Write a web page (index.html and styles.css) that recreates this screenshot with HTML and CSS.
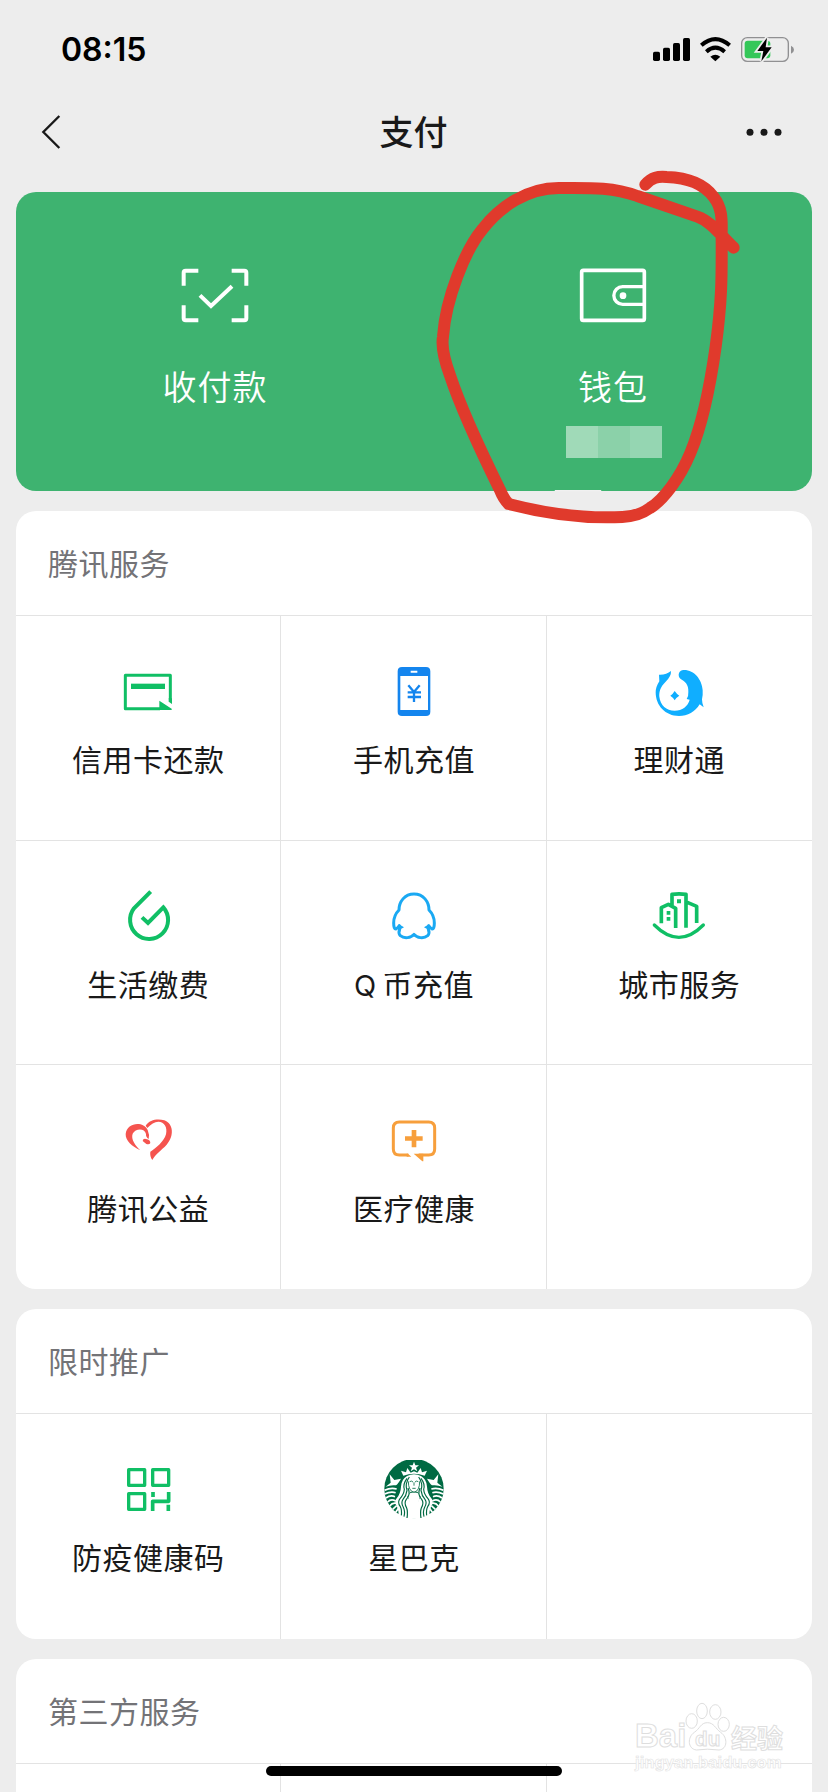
FILE: index.html
```html
<!DOCTYPE html>
<html lang="zh-CN">
<head>
<meta charset="utf-8">
<title>支付</title>
<link rel="stylesheet" href="styles.css">
</head>
<body>
<div class="screen">
  <header class="status">
    <span class="time">08:15</span>
    <svg class="status-icons" viewBox="708 105 450 90">
      <rect x="717" y="155" width="21" height="28" rx="5"/>
      <rect x="747" y="143" width="21" height="40" rx="5"/>
      <rect x="777" y="129" width="21" height="54" rx="5"/>
      <rect x="807" y="114" width="21" height="69" rx="5"/>
      <path d="M862 136Q904 99 947 136M877 155Q904 131 932 155" fill="none" stroke="#000" stroke-width="12"/>
      <path d="M889 170Q904 158 919 170L904 184Z"/>
      <rect x="983" y="113" width="140" height="71" rx="17" fill="none" stroke="#909092" stroke-width="4"/>
      <path d="M1131 137Q1140 141 1140 149Q1140 157 1131 161Z" fill="#909092"/>
      <rect x="992" y="122" width="77" height="53" rx="9" fill="#34c759"/>
      <path d="M1059 113L1030 153H1048L1042 184L1073 142H1055Z" fill="#000" stroke="#ededed" stroke-width="11" paint-order="stroke"/>
    </svg>
  </header>
  <nav class="nav">
    <svg class="back" viewBox="120 339 66 114"><path d="M178 348L130 396L178 444" fill="none" stroke="#191919" stroke-width="7"/></svg>
    <h1 class="title">支付</h1>
    <svg class="more" viewBox="990 380 120 33"><circle cx="1008" cy="396" r="10.5"/><circle cx="1050" cy="396" r="10.5"/><circle cx="1092" cy="396" r="10.5"/></svg>
  </nav>

  <main class="content">
    <section class="hero">
      <div class="hero-item">
        <svg class="hero-icon" viewBox="540 261 210 171"><path d="M551 317V278Q551 272 557 272H595M695 272H733Q739 272 739 278V317M739 376V415Q739 421 733 421H695M595 421H557Q551 421 551 415V376M600 346L633 378L696 319" fill="none" stroke="#fff" stroke-width="12"/></svg>
        <span class="hero-label">收付款</span>
      </div>
      <div class="hero-item">
        <svg class="hero-icon" viewBox="492 321 210 171"><rect x="503" y="331" width="188" height="150" rx="5" fill="none" stroke="#fff" stroke-width="11"/><path d="M691 380H626A26 26 0 0 0 626 433H691" fill="none" stroke="#fff" stroke-width="10"/><circle cx="627" cy="407" r="10" fill="#fff"/></svg>
        <span class="hero-label">钱包</span>
        <span class="mosaic"><i class="m1"></i><i class="m2"></i><i class="m3"></i></span>
      </div>
    </section>

    <section class="card">
      <h2 class="card-title">腾讯服务</h2>
      <div class="grid">
        <div class="cell">
          <svg class="icon" viewBox="354 486 180 180" fill="#10bf65"><path d="M511 598V526H376V626H480" fill="none" stroke="#10bf65" stroke-width="9" stroke-linejoin="round"/><rect x="393" y="551" width="102" height="16"/><path d="M478 602L516 627Q516 630 512 630H478ZM506 595H516V612L506 605Z"/></svg>
          <span class="label">信用卡还款</span>
        </div>
        <div class="cell">
          <svg class="icon" viewBox="72 126 180 180"><path fill="#1485ee" fill-rule="evenodd" d="M126 141H198Q211 141 211 154V275Q211 288 198 288H126Q113 288 113 275V154Q113 141 126 141ZM121 168V270H204V168ZM152 152V158H172V152Z"/><path d="M145 196L162 216L179 196M162 216V246M143 217H183M143 231H183" fill="none" stroke="#1485ee" stroke-width="7"/></svg>
          <span class="label">手机充值</span>
        </div>
        <div class="cell">
          <svg class="icon" viewBox="868 126 180 180" fill="#10aeff"><path d="M898 164Q920 165 934 153Q935 169 918 185C902 200 898 215 899 230C902 256 920 272 945 272C968 272 985 258 990 239L981 237Q987 228 986 216C987 193 976 185 963 177C952 168 957 150 972 150C1003 149 1027 178 1029 211Q1030 225 1027 238Q1027 250 1032 262L1020 253C1006 276 984 288 958 288C917 288 888 257 888 217Q888 201 899 184Z"/><path d="M945 213Q951 222 959 227Q950 232 945 241Q940 232 932 227Q940 222 945 213Z"/></svg>
          <span class="label">理财通</span>
        </div>
        <div class="cell">
          <svg class="icon" viewBox="174 80 180 180"><path d="M272 94L222 144A57 57 0 1 0 310 141L264 188L246 171" fill="none" stroke="#10bf65" stroke-width="12"/></svg>
          <span class="label">生活缴费</span>
        </div>
        <div class="cell">
          <svg class="icon" viewBox="72 80 180 180"><path d="M162 101C134 101 117 124 117 149Q101 165 101 188Q101 207 108 206Q112 204 118 196L119 207Q114 218 121 226C133 236 153 233 162 222C171 233 191 236 203 226Q210 218 205 207L206 196Q212 204 216 206Q223 207 223 188Q223 165 207 149C207 124 190 101 162 101Z" fill="none" stroke="#1aa9f3" stroke-width="9" stroke-linejoin="round"/><path d="M116 191L132 201L119 208ZM208 191L192 201L205 208Z" fill="#1aa9f3"/></svg>
          <span class="label"><span class="latin">Q</span>币充值</span>
        </div>
        <div class="cell">
          <svg class="icon" viewBox="868 80 180 180"><path d="M905 189V142L926 132L948 144V203M937 137V102Q958 99 979 102V202M983 126L1011 138V188" fill="none" stroke="#10bf65" stroke-width="11" stroke-linejoin="round"/><path d="M884 194Q958 268 1031 194" fill="none" stroke="#10bf65" stroke-width="10" stroke-linecap="round"/><path d="M921 152H932V163H921ZM921 170H932V181H921ZM952 117H964V129H952Z" fill="#10bf65"/></svg>
          <span class="label">城市服务</span>
        </div>
        <div class="cell">
          <svg class="icon" viewBox="174 92 180 180" fill="#f5544f"><path d="M241 210C216 198 196 181 197 161C200 127 249 121 263 149Q269 163 266 176Q257 170 258 161C254 142 226 144 218 160C212 176 226 196 241 210Z"/><path d="M257 136C268 117 295 114 313 120C341 130 343 168 320 193C303 211 286 221 277 239Q269 229 271 214C287 204 312 184 318 162C323 141 313 124 295 124Q278 125 262 143Z"/><path d="M248 182Q249 174 258 176Q271 178 271 188Q268 194 259 191Z"/></svg>
          <span class="label">腾讯公益</span>
        </div>
        <div class="cell">
          <svg class="icon" viewBox="972 92 180 180" fill="#f79f3c"><path d="M1045 224H1018Q1000 224 1000 206V143Q1000 125 1018 125H1106Q1124 125 1124 143V206Q1124 224 1106 224H1076" fill="none" stroke="#f79f3c" stroke-width="9"/><path d="M1035 168H1055V149H1069V168H1088V181H1069V201H1055V181H1035ZM1061 220H1090V243H1087ZM1040 220H1044L1054 229H1040Z"/></svg>
          <span class="label">医疗健康</span>
        </div>
        <div class="cell"></div>
      </div>
    </section>

    <section class="card promo">
      <h2 class="card-title">限时推广</h2>
      <div class="grid">
        <div class="cell">
          <svg class="icon" viewBox="114 60 180 180" fill="none" stroke="#10bf65" stroke-width="10" stroke-linejoin="round"><rect x="146" y="89" width="48" height="47"/><rect x="218" y="89" width="48" height="47"/><rect x="146" y="161" width="48" height="47"/><path d="M218 213V184H266V156M219 156V171M265 194V213" stroke-width="11"/></svg>
          <span class="label">防疫健康码</span>
        </div>
        <div class="cell">
          <svg class="icon" viewBox="912 60 180 180">
            <circle cx="1002" cy="146" r="89" fill="#006a43"/>
            <g fill="#fff">
              <path d="M1002 65L1006 76H1017L1008 83L1012 94L1002 88L992 94L996 83L987 76H998Z"/>
              <path d="M970 107L963 92L978 97L982 84L992 98L1002 94L1012 98L1022 84L1026 97L1041 92L1034 107Q1002 96 970 107Z"/>
              <path d="M917 140L932 128L929 103L943 120L963 116Q954 132 948 136Q932 134 917 140ZM1087 140L1072 128L1075 103L1061 120L1041 116Q1050 132 1056 136Q1072 134 1087 140Z"/>
              <path d="M981 108Q1002 98 1023 108Q1040 118 1041 140Q1042 160 1054 175Q1063 185 1053 200Q1047 215 1048 224Q1034 232 1021 234Q1027 215 1017 203Q1008 185 1023 170L1012 155H992L981 170Q996 185 987 203Q977 215 983 234Q970 232 956 224Q957 215 951 200Q941 185 950 175Q962 160 963 140Q964 118 981 108Z"/>
              <path d="M981 165Q1002 148 1023 165Q1012 183 1019 201Q1025 213 1021 236H983Q979 213 985 201Q992 183 981 165Z"/>
            </g>
            <g fill="none" stroke="#fff" stroke-width="5">
              <path d="M914 151Q932 142 950 147M914 162Q932 153 947 158M918 174Q931 164 945 170M923 186Q933 175 947 183M929 198Q937 187 949 190M938 208L950 197M947 217L956 204"/>
              <path d="M1090 151Q1072 142 1054 147M1090 162Q1072 153 1057 158M1086 174Q1073 164 1059 170M1081 186Q1071 175 1057 183M1075 198Q1067 187 1055 190M1066 208L1054 197M1057 217L1048 204"/>
            </g>
            <g fill="none" stroke="#006a43" stroke-width="3.5">
              <path d="M981 115Q968 132 973 148Q972 163 960 176Q951 187 961 200Q966 209 964 226M988 111Q974 131 981 151Q979 167 969 178Q962 188 970 202Q976 214 972 230M984 144Q993 163 979 178Q971 188 980 204Q984 215 981 234"/>
              <path d="M1023 115Q1036 132 1031 148Q1032 163 1044 176Q1053 187 1043 200Q1038 209 1040 226M1016 111Q1030 131 1023 151Q1025 167 1035 178Q1042 188 1034 202Q1028 214 1032 230M1020 144Q1011 163 1025 178Q1033 188 1024 204Q1020 215 1023 234"/>
              <path d="M985 124Q985 153 1002 157Q1019 153 1019 124M989 125Q995 121 999 126M1005 126Q1009 121 1015 125M1002 127V137M997 145H1007" stroke-width="2.5"/>
            </g>
          </svg>
          <span class="label">星巴克</span>
        </div>
        <div class="cell"></div>
      </div>
    </section>

    <section class="card">
      <h2 class="card-title">第三方服务</h2>
      <div class="grid"><div class="cell"></div><div class="cell"></div><div class="cell"></div></div>
    </section>
  </main>

  <svg class="annotation" viewBox="0 0 1242 1140" fill="none" stroke-linecap="round" stroke-linejoin="round">
    <path d="M424 992H560" stroke="#f1f1f1" stroke-width="4"/>
    <path d="M694 74C714 51 732 49 758 51C825 53 870 72 899 111C923 142 924 174 923 215C923 330 926 405 905 560C888 681 861 803 829 879C798 954 747 1021 708 1044Q672 1070 625 1071C500 1077 380 1057 284 1032Q269 1018 257 988C201 874 143 752 108 646Q80 570 87 530C95 414 155 268 205 208C258 140 339 84 434 84C540 83 600 82 670 108L850 170C890 184 917 222 959 263" stroke="#e03a2c" stroke-width="36"/>
  </svg>

  <div class="watermark">
    <div class="wm-row">
      <span class="wm-bai">Bai</span>
      <svg class="wm-paw" viewBox="430 184 141 150" fill="#fff" stroke="#dedede" stroke-width="3"><ellipse cx="484" cy="214" rx="16" ry="23"/><ellipse cx="524" cy="217" rx="17" ry="22"/><ellipse cx="453" cy="244" rx="17" ry="22"/><ellipse cx="549" cy="254" rx="17" ry="21"/><path d="M500 249C480 249 478 267 461 278C440 292 440 327 467 331Q500 326 535 331C561 329 562 293 540 278C524 267 520 249 500 249Z"/><text class="wm-du" x="501" y="318" text-anchor="middle">du</text></svg>
      <span class="wm-jy">经验</span>
    </div>
    <div class="wm-url">jingyan.baidu.com</div>
  </div>
  <div class="home-bar"></div>
</div>
</body>
</html>
```
FILE: styles.css
```css
* { box-sizing: border-box; }
body { margin: 0; background: #ededed; }
.screen {
  position: relative;
  width: 828px;
  height: 1792px;
  overflow: hidden;
  background: #ededed;
  color: #191919;
  font-family: "Noto Sans CJK SC", sans-serif;
}
svg { display: block; flex: none; }

.status {
  display: flex;
  justify-content: space-between;
  align-items: center;
  height: 100px;
  padding: 0 28px 0 61px;
}
.time { font: 600 32px/40px Inter, sans-serif; color: #000; }
.status-icons { width: 150px; height: 30px; }

.nav {
  display: flex;
  justify-content: space-between;
  align-items: center;
  height: 64px;
  padding: 0 44px 0 40px;
}
.back { width: 22px; height: 38px; margin-right: 21px; }
.title { margin: -2px 0 0; font-size: 34px; font-weight: 500; line-height: 48px; }
.more { width: 40px; height: 11px; fill: #191919; }

.content {
  display: flex;
  flex-direction: column;
  gap: 20px;
  padding: 28px 16px 0;
}
.hero {
  display: grid;
  grid-template-columns: 1fr 1fr;
  height: 299px;
  border-radius: 20px;
  background: #3eb370;
  color: #fff;
}
.hero-item {
  display: flex;
  flex-direction: column;
  align-items: center;
  padding-top: 75px;
}
.hero-icon { width: 70px; height: 57px; }
.hero-label {
  margin-top: 38px;
  font-size: 34px;
  font-weight: 350;
  line-height: 48px;
  letter-spacing: 1px;
}
.mosaic { display: flex; margin: 16px 0 0 2px; }
.mosaic i { width: 32px; height: 32px; }
.m1 { background: #a0dab8; }
.m2 { background: #8bd1a9; }
.m3 { background: #95d6b2; }

.card { border-radius: 20px; background: #fff; overflow: hidden; flex: none; }
.card-title {
  margin: 0;
  height: 104px;
  padding: 0 32px;
  font-size: 30px;
  font-weight: 400;
  line-height: 102px;
  letter-spacing: 0.5px;
  color: #737377;
}
.grid {
  display: grid;
  grid-template-columns: repeat(3, 1fr);
  grid-auto-rows: 224.67px;
}
.promo .grid { grid-auto-rows: 226px; }
.cell {
  display: flex;
  flex-direction: column;
  align-items: center;
  padding-top: 46px;
  border-top: 1px solid #e3e3e3;
  border-right: 1px solid #e3e3e3;
}
.cell:nth-child(3n+2) { padding-left: 1px; }
.cell:nth-child(3n) { border-right: 0; }
.icon { width: 60px; height: 60px; }
.label {
  margin-top: 16px;
  font-size: 30px;
  line-height: 40px;
  letter-spacing: 0.5px;
  white-space: nowrap;
}
.latin { margin-right: 6px; font-family: Inter, sans-serif; font-size: 29px; }

.annotation {
  position: absolute;
  left: 414px;
  top: 160px;
  width: 414px;
  height: 380px;
}

.watermark {
  position: absolute;
  left: 635px;
  top: 1701px;
  width: 150px;
  color: #fff;
  -webkit-text-stroke: 1px #dedede;
}
.wm-row { display: flex; align-items: flex-end; height: 50px; }
.wm-bai { width: 49px; font: 700 33px/30px "Liberation Sans", sans-serif; }
.wm-paw { width: 47px; height: 50px; }
.wm-du { font: 700 62px "Liberation Sans", sans-serif; fill: #fff; stroke: #dedede; stroke-width: 3px; -webkit-text-stroke: 0; }
.wm-jy { font-size: 26px; font-weight: 700; line-height: 28px; }
.wm-url { font: 700 16.7px/20px "Liberation Sans", sans-serif; margin-top: 2px; -webkit-text-stroke: 0.6px #e2e2e2; }

.home-bar {
  position: absolute;
  left: 266px;
  top: 1766px;
  width: 296px;
  height: 10px;
  border-radius: 5px;
  background: #000;
}
```
